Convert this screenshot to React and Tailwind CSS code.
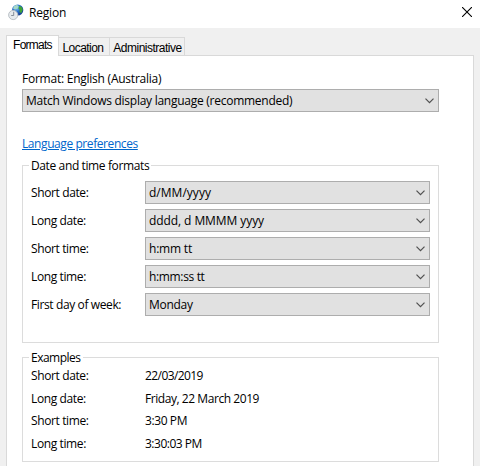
import { useState } from "react";

const TABS = [
  { name: "Formats", width: "w-[53px]", text: "tracking-[-0.75px]" },
  { name: "Location", width: "w-[52px] pr-0.5", text: "tracking-[-0.55px]" },
  { name: "Administrative", width: "w-[76px] pl-px", text: "tracking-[-0.5px]" },
];

const FORMATS = [
  { label: "Short date:", value: "d/MM/yyyy", text: "tracking-[0.02px]" },
  { label: "Long date:", value: "dddd, d MMMM yyyy", text: "tracking-[-0.08px]" },
  { label: "Short time:", value: "h:mm tt", text: "tracking-[-0.2px]" },
  { label: "Long time:", value: "h:mm:ss tt", text: "tracking-[-0.35px]" },
  { label: "First day of week:", value: "Monday", text: "tracking-[-0.3px]" },
];

const EXAMPLES = [
  { label: "Short date:", value: "22/03/2019", height: "h-[23px]", text: "tracking-[-0.58px]" },
  { label: "Long date:", value: "Friday, 22 March 2019", height: "h-[22px]", text: "tracking-[-0.44px]" },
  { label: "Short time:", value: "3:30 PM", height: "h-[23px]", text: "tracking-[-0.4px]" },
  { label: "Long time:", value: "3:30:03 PM", height: "h-[16px]", text: "tracking-[-0.5px]" },
];

function RegionIcon() {
  return (
    <svg width="16" height="17" viewBox="0 0 16 17">
      <defs>
        <radialGradient id="globe" cx="0.4" cy="0.3" r="0.7">
          <stop offset="0" stopColor="#8fd0f5" />
          <stop offset="0.5" stopColor="#2870c8" />
          <stop offset="1" stopColor="#123b8c" />
        </radialGradient>
      </defs>
      <circle cx="9.7" cy="6" r="5.6" fill="url(#globe)" />
      <path d="M6 2.2 9 .8l1.6 1.6-1.2 2.2-2.4.8L5 4.4z" fill="#a5d8c8" />
      <path d="M11.5 1.8 14 3.2l.8 2.6-1.6 3.4-1.8-1.4.4-2-1.4-1.4z" fill="#3fa535" />
      <circle cx="5.2" cy="11" r="4.6" fill="#e6eaed" stroke="#b4bbc1" strokeWidth="0.9" />
      <path d="M5.7 7.8v3.7H3.2" fill="none" stroke="#7b858e" strokeWidth="0.9" />
    </svg>
  );
}

function Select({ value, className }) {
  return (
    <button className={`flex h-[23px] items-center justify-between border border-[#adadad] bg-[#e1e1e1] pl-[3px] pr-1 text-left ${className}`}>
      <span>{value}</span>
      <svg width="9" height="6" viewBox="0 0 9 6" fill="none" stroke="#505050" strokeWidth="1.2">
        <path d="M.5.7 4.5 4.7 8.5.7" />
      </svg>
    </button>
  );
}

export default function App() {
  const [activeTab, setActiveTab] = useState("Formats");

  return (
    <div className="flex h-[466px] w-[480px] flex-col overflow-hidden bg-[#f0f0f0] font-['Open_Sans',sans-serif] text-[12px] leading-4 tracking-[-0.38px] text-black">
      <header className="flex h-7 shrink-0 items-start justify-between bg-white pl-2 pr-[8px]">
        <div className="flex items-start gap-[5px] pt-[4px]">
          <RegionIcon />
          <h1 className="pt-px tracking-[-0.2px]">Region</h1>
        </div>
        <button className="pt-[7px]">
          <svg width="10" height="10" viewBox="0 0 10 10" fill="none" stroke="#000" strokeWidth="1.1">
            <path d="M0 0l10 10M10 0 0 10" />
          </svg>
        </button>
      </header>

      <nav className="flex h-[27px] shrink-0 items-end pl-1.5 font-['Liberation_Sans',sans-serif]">
        {TABS.map(tab => (
          <button
            key={tab.name}
            onClick={() => setActiveTab(tab.name)}
            className={`border border-[#d9d9d9] whitespace-nowrap ${tab.width} ${tab.text} ${activeTab === tab.name ? "relative z-10 -mb-px h-[21px] border-b-0 bg-white pb-0.5" : "-ml-px h-[18px] border-b-0 pt-0.5"}`}
          >
            {tab.name}
          </button>
        ))}
      </nav>

      <main className="ml-1.5 mr-1.5 flex flex-1 flex-col border border-b-0 border-[#d9d9d9] bg-white pl-[15px] pr-[34px] pt-[15px]">
        <p className="tracking-[-0.24px]">Format: English (Australia)</p>
        <Select value="Match Windows display language (recommended)" className="mt-[2px] w-full tracking-[-0.26px]" />
        <a href="#" className="mt-6 self-start text-[#0066cc] tracking-[-0.42px] underline underline-offset-1">Language preferences</a>

        <fieldset className="mt-[4px] h-[187px] border border-[#dcdcdc] pl-2 pr-2">
          <legend className="-ml-0.5 px-0.5 pt-0.5">Date and time formats</legend>
          <div className="flex flex-col gap-[5px] pt-[7px]">
            {FORMATS.map(row => (
              <div key={row.label} className="flex items-center">
                <span className="w-[114px]">{row.label}</span>
                <Select value={row.value} className={`flex-1 ${row.text}`} />
              </div>
            ))}
          </div>
        </fieldset>

        <fieldset className="mt-[5px] h-[114px] border border-[#dcdcdc] pl-2 pr-2">
          <legend className="-ml-0.5 px-0.5 pt-0.5 tracking-[-0.5px]">Examples</legend>
          <div className="flex flex-col pt-0.5">
            {EXAMPLES.map(row => (
              <div key={row.label} className={`flex ${row.height}`}>
                <span className="w-[114px]">{row.label}</span>
                <span className={row.text}>{row.value}</span>
              </div>
            ))}
          </div>
        </fieldset>
      </main>
    </div>
  );
}
